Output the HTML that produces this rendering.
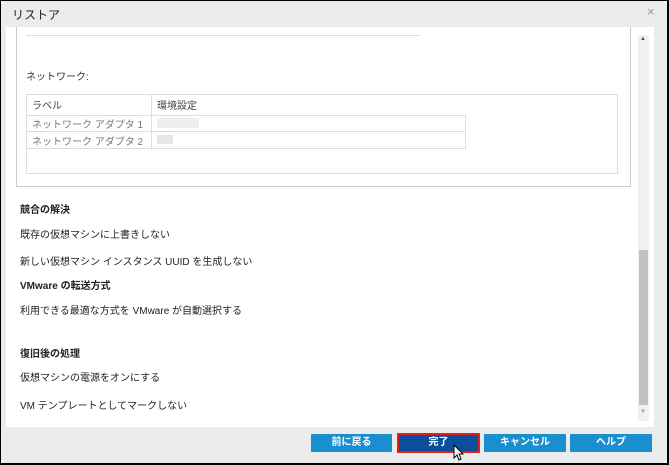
<!DOCTYPE html>
<html><head><meta charset="utf-8"><style>
*{margin:0;padding:0;box-sizing:border-box}
body{width:669px;height:465px;background:#000;font-family:"Liberation Sans","Noto Sans CJK JP",sans-serif;position:relative;overflow:hidden;font-size:10px;color:#222}
.dlg{position:absolute;left:1px;top:1px;width:666px;height:462px;background:#ececec}
.t{position:absolute;white-space:nowrap}
.content{position:absolute;left:6px;top:27px;width:648px;height:400px;background:#fff}
.btn{position:absolute;top:434px;height:18px;background:#1a8fd0;color:#fff;font-weight:bold;font-size:10px;text-align:center;line-height:18px;border-radius:1px}
</style></head><body>
<div class="dlg"></div>
<div class="t" style="left:12px;top:6px;font-size:12px;color:#222">リストア</div>
<div class="t" style="left:647px;top:4px;font-size:13px;color:#999">×</div>
<div class="content"></div>
<div style="position:absolute;left:16px;top:27px;width:615px;height:160px;border:1px solid #ccc;border-top:none"></div>
<div style="position:absolute;left:26px;top:35px;width:394px;height:1px;background:#ddd"></div>
<div class="t" style="left:26px;top:68px;font-size:10px;color:#333">ネットワーク:</div>
<div style="position:absolute;left:26px;top:94px;width:592px;height:80px;border:1px solid #ddd"></div>
<div style="position:absolute;left:27px;top:115px;width:438px;height:1px;background:#ddd"></div>
<div style="position:absolute;left:27px;top:131px;width:438px;height:1px;background:#ddd"></div>
<div style="position:absolute;left:27px;top:148px;width:438px;height:1px;background:#ddd"></div>
<div style="position:absolute;left:465px;top:115px;width:1px;height:34px;background:#ddd"></div>
<div style="position:absolute;left:151px;top:95px;width:1px;height:54px;background:#ddd"></div>
<div class="t" style="left:32px;top:97px;color:#444">ラベル</div>
<div class="t" style="left:157px;top:97px;color:#444">環境設定</div>
<div class="t" style="left:32px;top:116px;color:#777">ネットワーク アダプタ 1</div>
<div class="t" style="left:32px;top:133px;color:#777">ネットワーク アダプタ 2</div>
<div style="position:absolute;left:157px;top:118px;width:42px;height:10px;background:#eee"></div>
<div style="position:absolute;left:157px;top:135px;width:16px;height:9px;background:#e6e6e6"></div>
<div class="t" style="left:20px;top:201px;font-weight:bold">競合の解決</div>
<div class="t" style="left:20px;top:226px">既存の仮想マシンに上書きしない</div>
<div class="t" style="left:20px;top:253px">新しい仮想マシン インスタンス UUID を生成しない</div>
<div class="t" style="left:20px;top:277px;font-weight:bold">VMware の転送方式</div>
<div class="t" style="left:20px;top:302px">利用できる最適な方式を VMware が自動選択する</div>
<div class="t" style="left:20px;top:345px;font-weight:bold">復旧後の処理</div>
<div class="t" style="left:20px;top:369px">仮想マシンの電源をオンにする</div>
<div class="t" style="left:20px;top:397px">VM テンプレートとしてマークしない</div>
<div style="position:absolute;left:638px;top:35px;width:11px;height:386px;background:#f1f1f1"></div>
<div style="position:absolute;left:639px;top:250px;width:9px;height:155px;background:#c1c1c1"></div>
<div class="t" style="left:640px;top:36px;font-size:6px;color:#555">▲</div>
<div class="t" style="left:640px;top:409px;font-size:6px;color:#999">▼</div>
<div class="btn" style="left:311px;width:81px">前に戻る</div>
<div class="btn" style="left:397px;top:433px;height:20px;width:83px;background:#0b4f9c;box-shadow:inset 0 0 0 2px #e02020;line-height:20px">完了</div>
<div class="btn" style="left:484px;width:82px">キャンセル</div>
<div class="btn" style="left:570px;width:82px">ヘルプ</div>
<svg style="position:absolute;left:451px;top:444px" width="14" height="20"><path d="M3 1v13l3-3 2 5 2-1-2-5h4z" fill="#fff" stroke="#000" stroke-width="1"/></svg>
</body></html>
